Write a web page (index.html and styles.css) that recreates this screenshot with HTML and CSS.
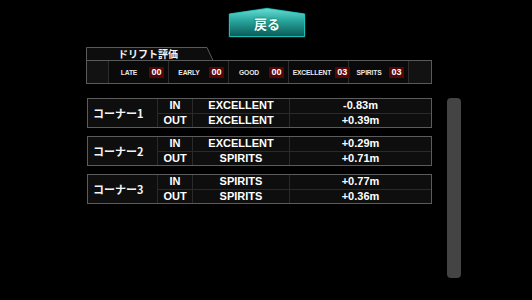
FILE: index.html
```html
<!DOCTYPE html>
<html>
<head>
<meta charset="utf-8">
<link rel="stylesheet" href="styles.css">
</head>
<body>
<div class="page">
  <div class="top">
    <div class="back">
      <svg class="back-bg" width="78" height="31" viewBox="0 0 78 31">
        <defs>
          <linearGradient id="g" x1="0" y1="0" x2="0" y2="1">
            <stop offset="0" stop-color="#6adcd2"/>
            <stop offset="0.4" stop-color="#2aaaa2"/>
            <stop offset="1" stop-color="#0a5a57"/>
          </linearGradient>
        </defs>
        <polygon points="0.5,6.5 39,0.5 77.5,6.5 77.5,30.5 0.5,30.5" fill="#0a3a38"/>
        <polygon points="1.5,7 39,1.5 76.5,7 76.5,29.5 1.5,29.5" fill="url(#g)" stroke="#22d8cc" stroke-width="0.8"/>
      </svg>
      <span class="back-label">戻る</span>
    </div>
  </div>

  <div class="drift">
    <div class="tab">
      <svg class="tab-bg" width="128" height="14" viewBox="0 0 128 14">
        <polygon points="0.5,13.5 0.5,0.5 121,0.5 127,13.5" fill="#0d0d0d" stroke="#5a5a5a" stroke-width="1"/>
      </svg>
      <span class="tab-label">ドリフト評価</span>
    </div>
    <div class="drift-row">
      <div class="dcell edge"></div>
      <div class="dcell"><span class="dlabel">LATE</span><span class="badge">00</span></div>
      <div class="dcell"><span class="dlabel">EARLY</span><span class="badge">00</span></div>
      <div class="dcell"><span class="dlabel">GOOD</span><span class="badge">00</span></div>
      <div class="dcell"><span class="dlabel">EXCELLENT</span><span class="badge">03</span></div>
      <div class="dcell"><span class="dlabel">SPIRITS</span><span class="badge">03</span></div>
      <div class="dcell edge last"></div>
    </div>
  </div>

  <div class="main">
    <div class="list">
      <div class="corner">
        <div class="cname">コーナー1</div>
        <div class="rows">
          <div class="row"><span class="side">IN</span><span class="grade">EXCELLENT</span><span class="val">-0.83m</span></div>
          <div class="row"><span class="side">OUT</span><span class="grade">EXCELLENT</span><span class="val">+0.39m</span></div>
        </div>
      </div>
      <div class="corner">
        <div class="cname">コーナー2</div>
        <div class="rows">
          <div class="row"><span class="side">IN</span><span class="grade">EXCELLENT</span><span class="val">+0.29m</span></div>
          <div class="row"><span class="side">OUT</span><span class="grade">SPIRITS</span><span class="val">+0.71m</span></div>
        </div>
      </div>
      <div class="corner">
        <div class="cname">コーナー3</div>
        <div class="rows">
          <div class="row"><span class="side">IN</span><span class="grade">SPIRITS</span><span class="val">+0.77m</span></div>
          <div class="row"><span class="side">OUT</span><span class="grade">SPIRITS</span><span class="val">+0.36m</span></div>
        </div>
      </div>
    </div>
    <div class="scrollbar"></div>
  </div>
</div>
</body>
</html>
```
FILE: styles.css
```css
html, body {
  margin: 0;
  padding: 0;
  background: #000;
}
body {
  width: 532px;
  height: 300px;
  overflow: hidden;
  font-family: "Liberation Sans", Arial, "Noto Sans CJK JP", sans-serif;
  color: #fff;
}
.page {
  display: flex;
  flex-direction: column;
}
.top {
  display: flex;
  padding-top: 7px;
  padding-left: 228px;
  height: 31px;
}
.back {
  display: grid;
  width: 78px;
  height: 31px;
}
.back-bg, .back-label {
  grid-area: 1 / 1;
}
.back-label {
  font-family: "Noto Sans CJK JP", sans-serif;
  font-weight: bold;
  font-size: 13px;
  line-height: 31px;
  text-align: center;
  padding-top: 1px;
  color: #f2fffe;
  text-shadow: 0 0 2px #064;
}
.drift {
  margin-top: 9px;
  margin-left: 86px;
  display: flex;
  flex-direction: column;
  width: 346px;
}
.tab {
  display: grid;
  width: 128px;
  height: 14px;
  margin-bottom: -1px;
}
.tab-bg, .tab-label { grid-area: 1 / 1; }
.tab-label {
  font-family: "Noto Sans CJK JP", sans-serif;
  font-weight: bold;
  font-size: 10px;
  line-height: 14px;
  padding-left: 32px;
  color: #f4f4f4;
}
.drift-row {
  display: flex;
  height: 22px;
  border: 1px solid #5a5a5a;
  background: #0a0a0a;
}
.dcell {
  width: 60px;
  display: flex;
  align-items: center;
  padding-right: 4px;
  box-sizing: border-box;
  border-right: 1px solid #2c2c2c;
}
.dcell.edge { width: 22px; padding: 0; }
.dcell.last { border-right: none; width: 22px; background: #121212; }
.dcell:first-child { background: #121212; }
.dlabel {
  flex: 1;
  text-align: center;
  font-size: 8px;
  font-weight: bold;
  letter-spacing: -0.2px;
  white-space: nowrap;
  color: #e8e8e8;
  transform: scaleX(0.84);
}
.badge {
  flex: none;
  width: 15px;
  height: 11px;
  background: #5a0505;
  font-size: 9px;
  font-weight: bold;
  line-height: 11px;
  text-align: center;
  color: #fff;
}
.main {
  display: flex;
  margin-top: 14px;
  margin-left: 87px;
  align-items: flex-start;
}
.list {
  display: flex;
  flex-direction: column;
  gap: 8px;
  width: 345px;
}
.corner {
  display: flex;
  height: 30px;
  box-sizing: border-box;
  border: 1px solid #5c5c5c;
  background: #0e0e0e;
}
.cname {
  width: 70px;
  flex: none;
  display: flex;
  align-items: center;
  padding-left: 5px;
  box-sizing: border-box;
  font-family: "Noto Sans CJK JP", sans-serif;
  font-weight: bold;
  font-size: 11px;
  border-right: 1px solid #2a2a2a;
  color: #f4f4f4;
}
.rows {
  flex: 1;
  display: flex;
  flex-direction: column;
}
.row {
  flex: 1;
  display: flex;
  align-items: center;
  font-weight: bold;
  font-size: 11px;
  line-height: 13px;
}
.row + .row { border-top: 1px solid #2a2a2a; }
.side {
  width: 34px;
  border-right: 1px solid #2a2a2a;
  align-self: stretch;
  display: flex;
  align-items: center;
  justify-content: center;
}
.grade {
  width: 96px;
  border-right: 1px solid #2a2a2a;
  align-self: stretch;
  display: flex;
  align-items: center;
  justify-content: center;
}
.val {
  flex: 1;
  text-align: center;
}
.scrollbar {
  margin-left: 15px;
  width: 14px;
  height: 180px;
  border-radius: 4px;
  background: #444;
}
```
